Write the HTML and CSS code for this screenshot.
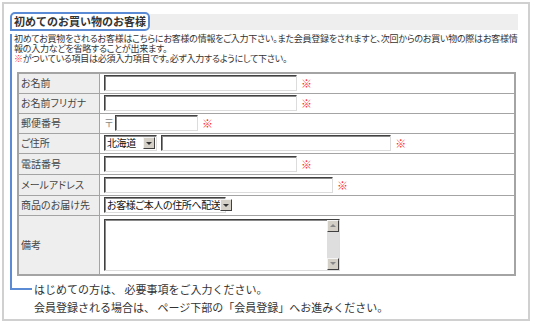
FILE: index.html
```html
<!DOCTYPE html>
<html lang="ja">
<head>
  <meta charset="UTF-8" />
  <title>初めてのお買い物のお客様</title>
  <link rel="stylesheet" href="styles.css">
</head>
<body>
  <div class="frame">
    <div class="head">
      <h2 class="head-title">初めてのお買い物のお客様</h2>
      <div class="head-bar"></div>
    </div>

    <div class="guide">
      <p class="intro">
        初めてお買物をされるお客様はこちらにお客様の情報をご入力下さい。また会員登録をされますと、次回からのお買い物の際はお客様情<br>
        報の入力などを省略することが出来ます。<br>
        <span class="req">※</span>がついている項目は必須入力項目です。必ず入力するようにして下さい。
      </p>

      <table class="form-table">
        <tr>
          <th>お名前</th>
          <td><input type="text" class="w193" /><span class="req mark">※</span></td>
        </tr>
        <tr>
          <th>お名前フリガナ</th>
          <td><input type="text" class="w193" /><span class="req mark">※</span></td>
        </tr>
        <tr>
          <th>郵便番号</th>
          <td><span class="zip">〒</span><input type="text" class="w83" /><span class="req mark">※</span></td>
        </tr>
        <tr>
          <th>ご住所</th>
          <td>
            <span class="select w53"><span class="select-val">北海道</span><span class="select-btn"></span></span>
            <input type="text" class="w230" /><span class="req mark">※</span>
          </td>
        </tr>
        <tr class="tall">
          <th>電話番号</th>
          <td><input type="text" class="w193" /><span class="req mark">※</span></td>
        </tr>
        <tr class="tall">
          <th>メールアドレス</th>
          <td><input type="text" class="w229" /><span class="req mark">※</span></td>
        </tr>
        <tr>
          <th>商品のお届け先</th>
          <td><span class="select w122"><span class="select-val">お客様ご本人の住所へ配送</span><span class="select-btn"></span></span></td>
        </tr>
        <tr class="memo-row">
          <th>備考</th>
          <td>
            <div class="memo">
              <div class="memo-body"></div>
              <div class="memo-sb">
                <span class="sb-btn up"></span>
                <span class="sb-track"></span>
                <span class="sb-btn down"></span>
              </div>
            </div>
          </td>
        </tr>
      </table>
    </div>

    <div class="note">
      <div class="corner"></div>
      <p class="note-text">
        はじめての方は、 必要事項をご入力ください。<br>
        会員登録される場合は、 ページ下部の「会員登録」へお進みください。
      </p>
    </div>
  </div>
</body>
</html>
```

FILE: styles.css
```css
body {
  margin: 0;
  background: #fff;
  font-family: "Noto Sans CJK JP", sans-serif;
  color: #333;
}

/* outer frame */
.frame {
  margin: 2px;
  width: 528px;
  height: 319px;
  box-sizing: border-box;
  border: 2px solid #d0d0d0;
  padding: 8px 10px 0 6px;
}

/* heading */
.head {
  display: flex;
  align-items: center;
}

.head-title {
  margin: 0;
  border: 2px solid #5b8bd4;
  border-radius: 5px 5px 5px 0;
  padding: 0 2px;
  font-size: 11px;
  font-weight: bold;
  line-height: 15px;
  color: #333;
  background: #fff;
}

.head-bar {
  flex: 1;
  height: 16px;
  background: #efeeee;
}

/* blue guide line */
.guide {
  border-left: 2px solid #5b8bd4;
  padding-left: 2px;
}

.intro {
  margin: 3px 0 0;
  font-size: 9px;
  line-height: 10px;
  white-space: nowrap;
  font-feature-settings: "palt";
  letter-spacing: -0.25px;
}

.req {
  color: #ff3030;
}

/* form table */
.form-table {
  margin: 8px 0 0 3px;
  width: 499px;
  border-collapse: collapse;
  border: 2px solid #a4a4a4;
}

.form-table tr {
  height: 20px;
}

.form-table tr.tall {
  height: 21px;
}

.form-table tr.memo-row {
  height: 60px;
}

.form-table th,
.form-table td {
  border: 1px solid #a4a4a4;
  padding: 0 0 0 4px;
  font-size: 10px;
  line-height: 12px;
  text-align: left;
  vertical-align: middle;
}

.form-table th {
  width: 78px;
  padding-left: 2px;
  background: #efeeee;
  font-weight: normal;
  color: #444;
  white-space: nowrap;
  font-feature-settings: "palt";
}

.form-table td {
  background: #fff;
  white-space: nowrap;
}

input {
  box-sizing: border-box;
  height: 16px;
  margin: 0;
  padding: 0 2px;
  border: 1px solid;
  border-color: #404040 #dcdcdc #dcdcdc #404040;
  box-shadow: inset 1px 1px #8a8a8a;
  vertical-align: middle;
  font-family: "Noto Sans CJK JP", sans-serif;
  font-size: 10px;
  background: #fff;
}

.w193 { width: 193px; }
.w83 { width: 83px; }
.w230 { width: 230px; margin-left: 2px; }
.w229 { width: 229px; }

.mark {
  margin-left: 4px;
  font-size: 11px;
  font-weight: bold;
  vertical-align: middle;
}

.zip {
  display: inline-block;
  width: 11px;
  color: #888;
  vertical-align: middle;
}

/* select boxes */
.select {
  display: inline-flex;
  align-items: center;
  box-sizing: border-box;
  height: 16px;
  border: 1px solid;
  border-color: #404040 #dcdcdc #dcdcdc #404040;
  box-shadow: inset 1px 1px #8a8a8a;
  background: #fff;
  vertical-align: middle;
}

.w53 { width: 53px; }
.w122 { width: 122px; }

.select-val {
  flex: 1;
  padding-left: 2px;
  font-size: 10px;
  line-height: 12px;
  color: #111;
  white-space: nowrap;
  font-feature-settings: "palt";
  letter-spacing: -0.4px;
}

.select-btn {
  flex: none;
  display: flex;
  align-items: center;
  justify-content: center;
  box-sizing: border-box;
  width: 12px;
  height: 12px;
  margin-right: 1px;
  background: #d4d0c8;
  border: 1px solid;
  border-color: #f4f4f4 #404040 #404040 #f4f4f4;
}

.select-btn::after {
  content: "";
  border-left: 3px solid transparent;
  border-right: 3px solid transparent;
  border-top: 3px solid #333;
}

/* memo textarea */
.memo {
  display: flex;
  box-sizing: border-box;
  width: 236px;
  height: 52px;
  border: 1px solid;
  border-color: #404040 #dcdcdc #dcdcdc #404040;
  box-shadow: inset 1px 1px #8a8a8a;
  background: #fff;
}

.memo-body {
  flex: 1;
}

.memo-sb {
  display: flex;
  flex-direction: column;
  width: 12px;
  background: #dedede;
}

.sb-track {
  flex: 1;
}

.sb-btn {
  display: flex;
  align-items: center;
  justify-content: center;
  box-sizing: border-box;
  height: 12px;
  background: #d4d0c8;
  border: 1px solid;
  border-color: #f4f4f4 #404040 #404040 #f4f4f4;
}

.sb-btn::after {
  content: "";
  border-left: 3px solid transparent;
  border-right: 3px solid transparent;
}

.sb-btn.up::after {
  border-bottom: 3px solid #888;
}

.sb-btn.down::after {
  border-top: 3px solid #888;
}

/* bottom note */
.note {
  display: flex;
  align-items: flex-start;
}

.corner {
  flex: none;
  width: 20px;
  height: 12px;
  border-left: 2px solid #5b8bd4;
  border-bottom: 2px solid #5b8bd4;
}

.note-text {
  margin: 0 0 0 2px;
  padding-top: 4px;
  font-size: 11px;
  line-height: 18px;
  color: #333;
  white-space: nowrap;
}
```
